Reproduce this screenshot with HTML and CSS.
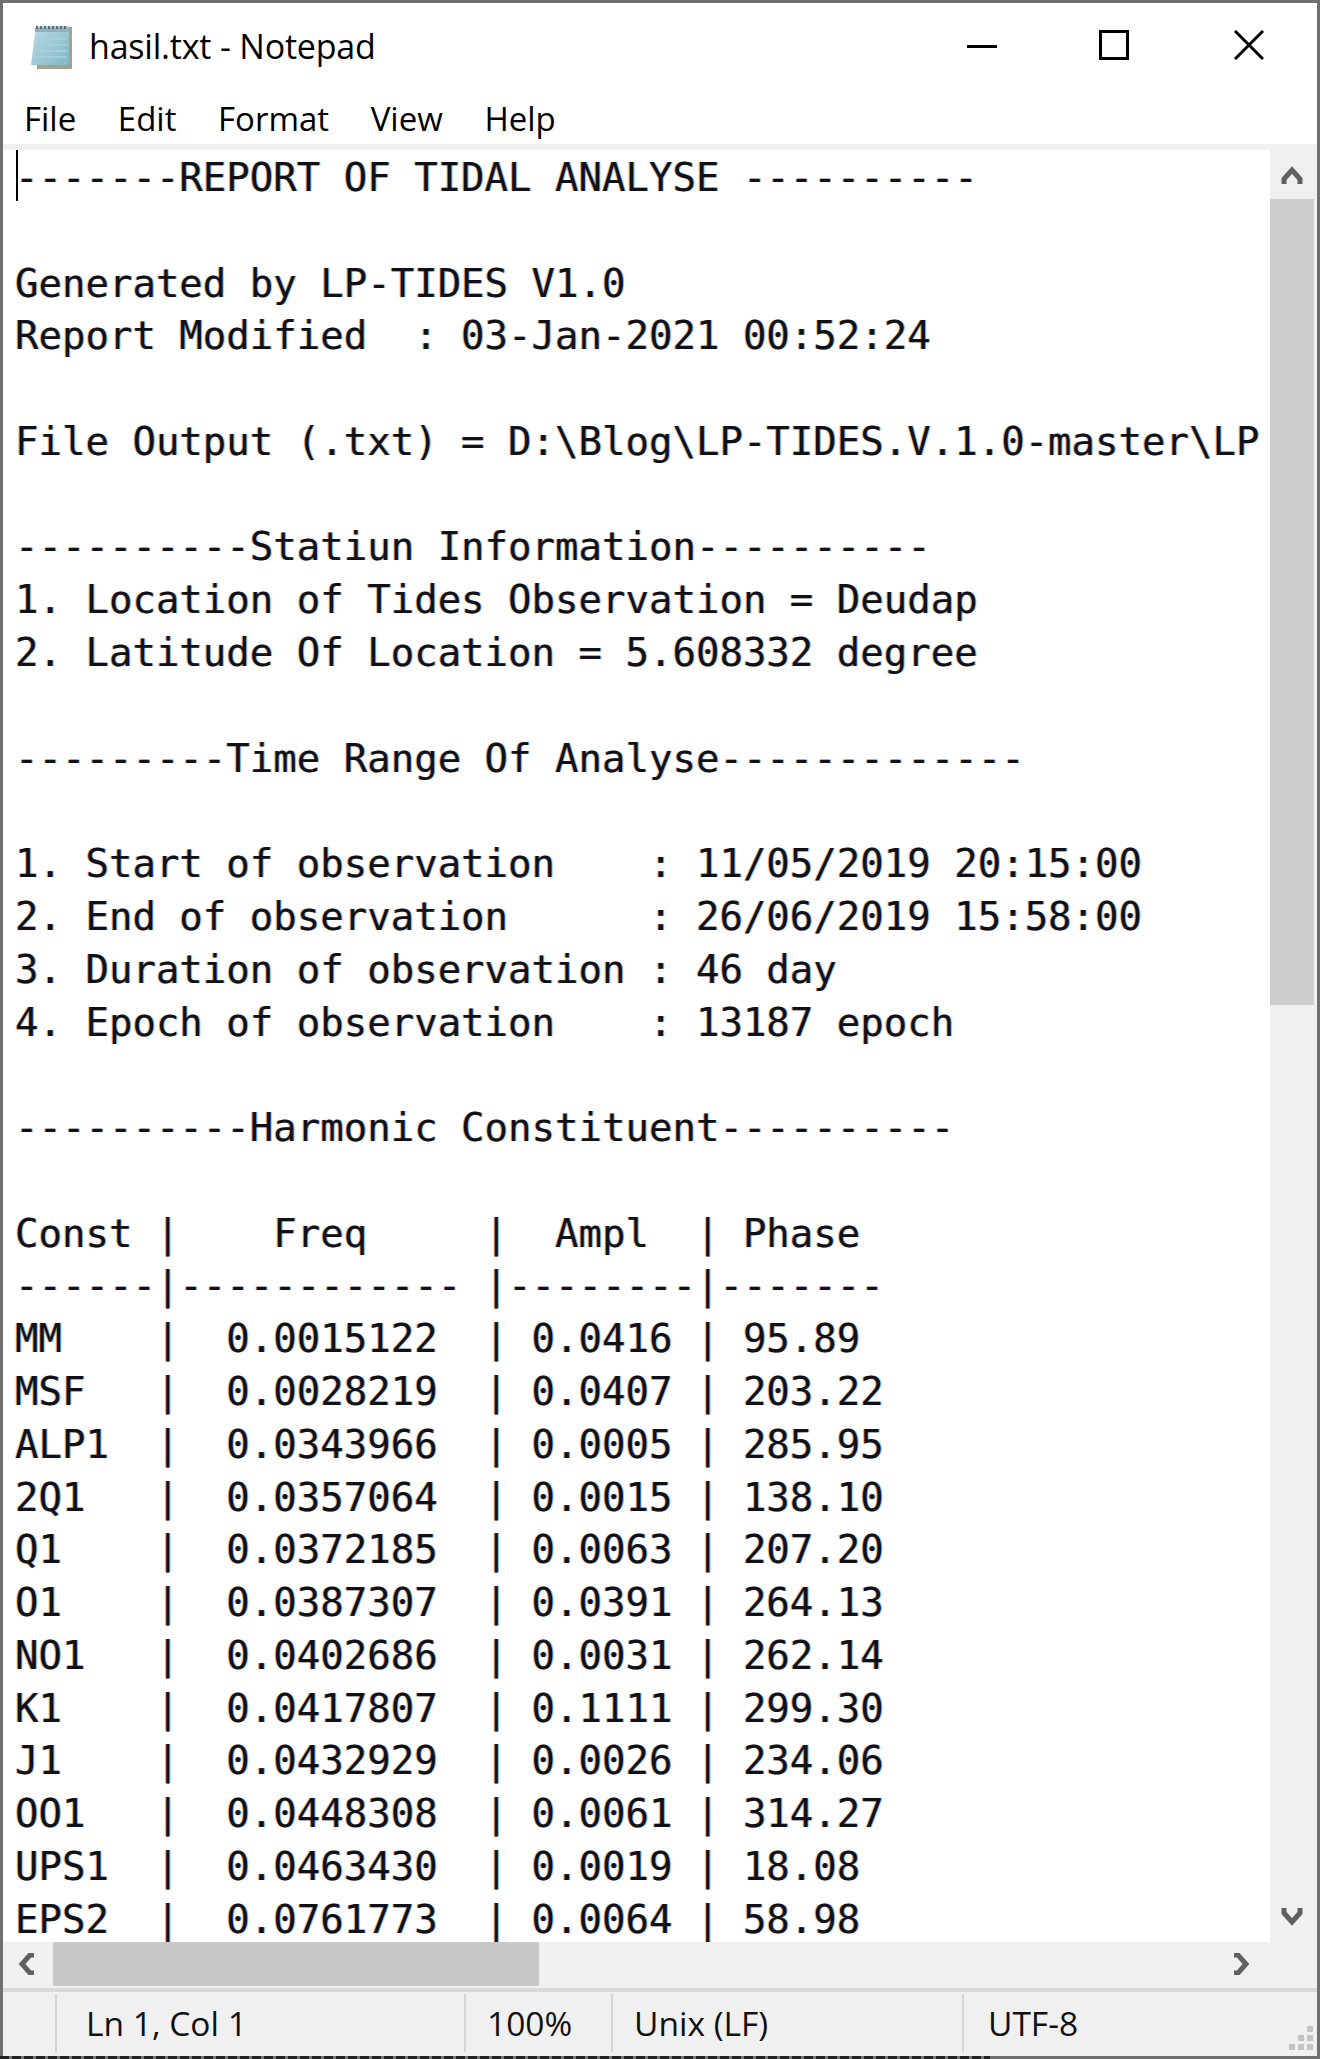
FILE: index.html
```html
<!DOCTYPE html>
<html lang="en">
<head>
    <meta charset="UTF-8">
    <title>hasil.txt - Notepad</title>
    <link rel="stylesheet" href="styles.css">
</head>
<body>
    <div class="window">
        <div class="titlebar">
            <svg class="app-icon" width="44" height="46" viewBox="0 0 44 46">
                <defs>
                    <linearGradient id="pad" x1="0" y1="0" x2="1" y2="1">
                        <stop offset="0" stop-color="#bcdbe6"/>
                        <stop offset="1" stop-color="#7fb9c6"/>
                    </linearGradient>
                </defs>
                <path d="M8 2H41V41H3Z" fill="url(#pad)"/>
                <path d="M41 3H44V45H9V41H41Z" fill="#a89f8c"/>
                <path d="M7 4H41V8H7Z" fill="#8fb2bb"/>
                <path d="M8 2h2v3h-2zM12 2h2v3h-2zM16 2h2v3h-2zM20 2h2v3h-2zM24 2h2v3h-2zM28 2h2v3h-2zM32 2h2v3h-2zM36 2h2v3h-2z" fill="#5d6a6e"/>
                <path d="M9 15H38M8 21H38M7 27H38M6 33H38" stroke="#a5cfdb" stroke-width="2" fill="none"/>
            </svg>
            <span class="title">hasil.txt - Notepad</span>
            <div class="controls">
                <svg class="ctl ctl-min" width="30" height="30" viewBox="0 0 30 30"><path d="M0 16.5H30" stroke="#000" stroke-width="3"/></svg>
                <svg class="ctl ctl-max" width="30" height="30" viewBox="0 0 30 30"><rect x="1.5" y="1.5" width="27" height="27" fill="none" stroke="#000" stroke-width="3"/></svg>
                <svg class="ctl ctl-close" width="30" height="30" viewBox="0 0 30 30"><path d="M1 1L29 29M29 1L1 29" stroke="#000" stroke-width="3"/></svg>
            </div>
        </div>

        <div class="menubar">
            <span>File</span>
            <span>Edit</span>
            <span>Format</span>
            <span>View</span>
            <span>Help</span>
        </div>

        <div class="editor">
            <div class="textarea">
                <div class="caret"></div>
<pre class="content">-------REPORT OF TIDAL ANALYSE ----------

Generated by LP-TIDES V1.0
Report Modified  : 03-Jan-2021 00:52:24

File Output (.txt) = D:\Blog\LP-TIDES.V.1.0-master\LP

----------Statiun Information----------
1. Location of Tides Observation = Deudap
2. Latitude Of Location = 5.608332 degree

---------Time Range Of Analyse-------------

1. Start of observation    : 11/05/2019 20:15:00
2. End of observation      : 26/06/2019 15:58:00
3. Duration of observation : 46 day
4. Epoch of observation    : 13187 epoch

----------Harmonic Constituent----------

Const |    Freq     |  Ampl  | Phase
------|------------ |--------|-------
MM    |  0.0015122  | 0.0416 | 95.89
MSF   |  0.0028219  | 0.0407 | 203.22
ALP1  |  0.0343966  | 0.0005 | 285.95
2Q1   |  0.0357064  | 0.0015 | 138.10
Q1    |  0.0372185  | 0.0063 | 207.20
O1    |  0.0387307  | 0.0391 | 264.13
NO1   |  0.0402686  | 0.0031 | 262.14
K1    |  0.0417807  | 0.1111 | 299.30
J1    |  0.0432929  | 0.0026 | 234.06
OO1   |  0.0448308  | 0.0061 | 314.27
UPS1  |  0.0463430  | 0.0019 | 18.08
EPS2  |  0.0761773  | 0.0064 | 58.98</pre>
            </div>
            <div class="vscroll">
                <svg class="arrow arrow-up" width="22" height="20" viewBox="0 0 22 20"><path d="M3 18V13L11 4L19 13V18" fill="none" stroke="#606060" stroke-width="5"/></svg>
                <div class="vthumb"></div>
                <svg class="arrow arrow-down" width="22" height="20" viewBox="0 0 22 20"><path d="M3 2V7L11 16L19 7V2" fill="none" stroke="#606060" stroke-width="5"/></svg>
            </div>
        </div>

        <div class="hscroll">
            <div class="hbutton">
                <svg width="18" height="22" viewBox="0 0 18 22"><path d="M16 2H12L4 11L12 20H16" fill="none" stroke="#606060" stroke-width="5"/></svg>
            </div>
            <div class="hthumb"></div>
            <svg class="arrow-right" width="18" height="22" viewBox="0 0 18 22"><path d="M2 2H6L14 11L6 20H2" fill="none" stroke="#606060" stroke-width="5"/></svg>
        </div>

        <div class="statusbar">
            <div class="cell cell-blank"></div>
            <div class="cell cell-pos">Ln 1, Col 1</div>
            <div class="cell cell-zoom">100%</div>
            <div class="cell cell-eol">Unix (LF)</div>
            <div class="cell cell-enc">UTF-8</div>
            <svg class="grip" width="24" height="24" viewBox="0 0 24 24">
                <path d="M18 0h6v6h-6zM9 9h6v6h-6zM18 9h6v6h-6zM0 18h6v6h-6zM9 18h6v6h-6zM18 18h6v6h-6z" fill="#c4c4c4"/>
            </svg>
        </div>
    </div>
    <div class="below"></div>
</body>
</html>
```

FILE: styles.css
```css
html, body {
    margin: 0;
    padding: 0;
    background-color: #6f6f6f;
}
.window {
    display: flex;
    flex-direction: column;
    height: 2053px;
    margin: 3px 3px 0 3px;
    background-color: #fff;
    font-family: "Open Sans", sans-serif;
    font-size: 34px;
    color: #000;
    overflow: hidden;
}
.below {
    height: 3px;
    width: 990px;
    background: repeating-linear-gradient(90deg, #222 0, #222 9px, #777 9px, #777 12px);
}

/* title bar */
.titlebar {
    display: flex;
    align-items: center;
    height: 85px;
    padding-left: 25px;
    flex-shrink: 0;
}
.app-icon {
    margin-top: 2px;
}
.title {
    margin-left: 17px;
    letter-spacing: -0.2px;
}
.controls {
    display: flex;
    margin-left: auto;
    padding-right: 53px;
    margin-top: -1px;
}
.ctl-max {
    margin-left: 102px;
}
.ctl-close {
    margin-left: 105px;
}

/* menu */
.menubar {
    display: flex;
    gap: 41.6px;
    height: 56px;
    padding-left: 21px;
    font-size: 33px;
    line-height: 62px;
    flex-shrink: 0;
}

/* text area */
.editor {
    display: flex;
    height: 1798px;
    flex-shrink: 0;
    background-color: #f0f0f0;
}
.textarea {
    position: relative;
    width: 1267px;
    margin-top: 6px;
    overflow: hidden;
    background-color: #fff;
}
.content {
    margin: 0;
    padding: 2px 0 0 12px;
    font-family: "DejaVu Sans Mono", monospace;
    font-size: 39px;
    line-height: 52.78px;
    color: #101018;
    text-shadow: -1px 0 rgba(190, 110, 20, 0.45), 1px 0 rgba(40, 120, 200, 0.45);
}
.caret {
    position: absolute;
    left: 13px;
    top: 0;
    width: 2px;
    height: 51px;
    background-color: #000;
}
.vscroll {
    position: relative;
    width: 47px;
}
.vthumb {
    position: absolute;
    left: 0;
    top: 55px;
    width: 44px;
    height: 806px;
    background-color: #cdcdcd;
}
.arrow {
    position: absolute;
    left: 11px;
}
.arrow-up {
    top: 22px;
}
.arrow-down {
    bottom: 16px;
}

/* horizontal scroll */
.hscroll {
    display: flex;
    align-items: flex-start;
    height: 46px;
    background-color: #f0f0f0;
    flex-shrink: 0;
}
.hbutton {
    width: 50px;
    padding: 11px 0 0 15px;
    box-sizing: border-box;
}
.hbutton svg {
    display: block;
}
.hthumb {
    width: 486px;
    height: 44px;
    background-color: #c8c8c8;
}
.arrow-right {
    margin: 11px 0 0 693px;
}

/* status bar */
.statusbar {
    display: flex;
    position: relative;
    height: 68px;
    box-sizing: border-box;
    border-top: 4px solid #d9d9d9;
    padding-top: 2px;
    background-color: #f0f0f0;
    font-size: 33.5px;
    color: #111;
    flex-shrink: 0;
}
.cell {
    height: 58px;
    box-sizing: border-box;
    border-left: 2px solid #d4d4d4;
    line-height: 58px;
}
.cell-blank {
    width: 52px;
    border-left: none;
}
.cell-pos {
    width: 409px;
    padding-left: 29px;
}
.cell-zoom {
    width: 147px;
    padding-left: 21px;
}
.cell-eol {
    width: 351px;
    padding-left: 21px;
}
.cell-enc {
    padding-left: 24px;
}
.grip {
    position: absolute;
    right: 4px;
    bottom: 6px;
}
```
